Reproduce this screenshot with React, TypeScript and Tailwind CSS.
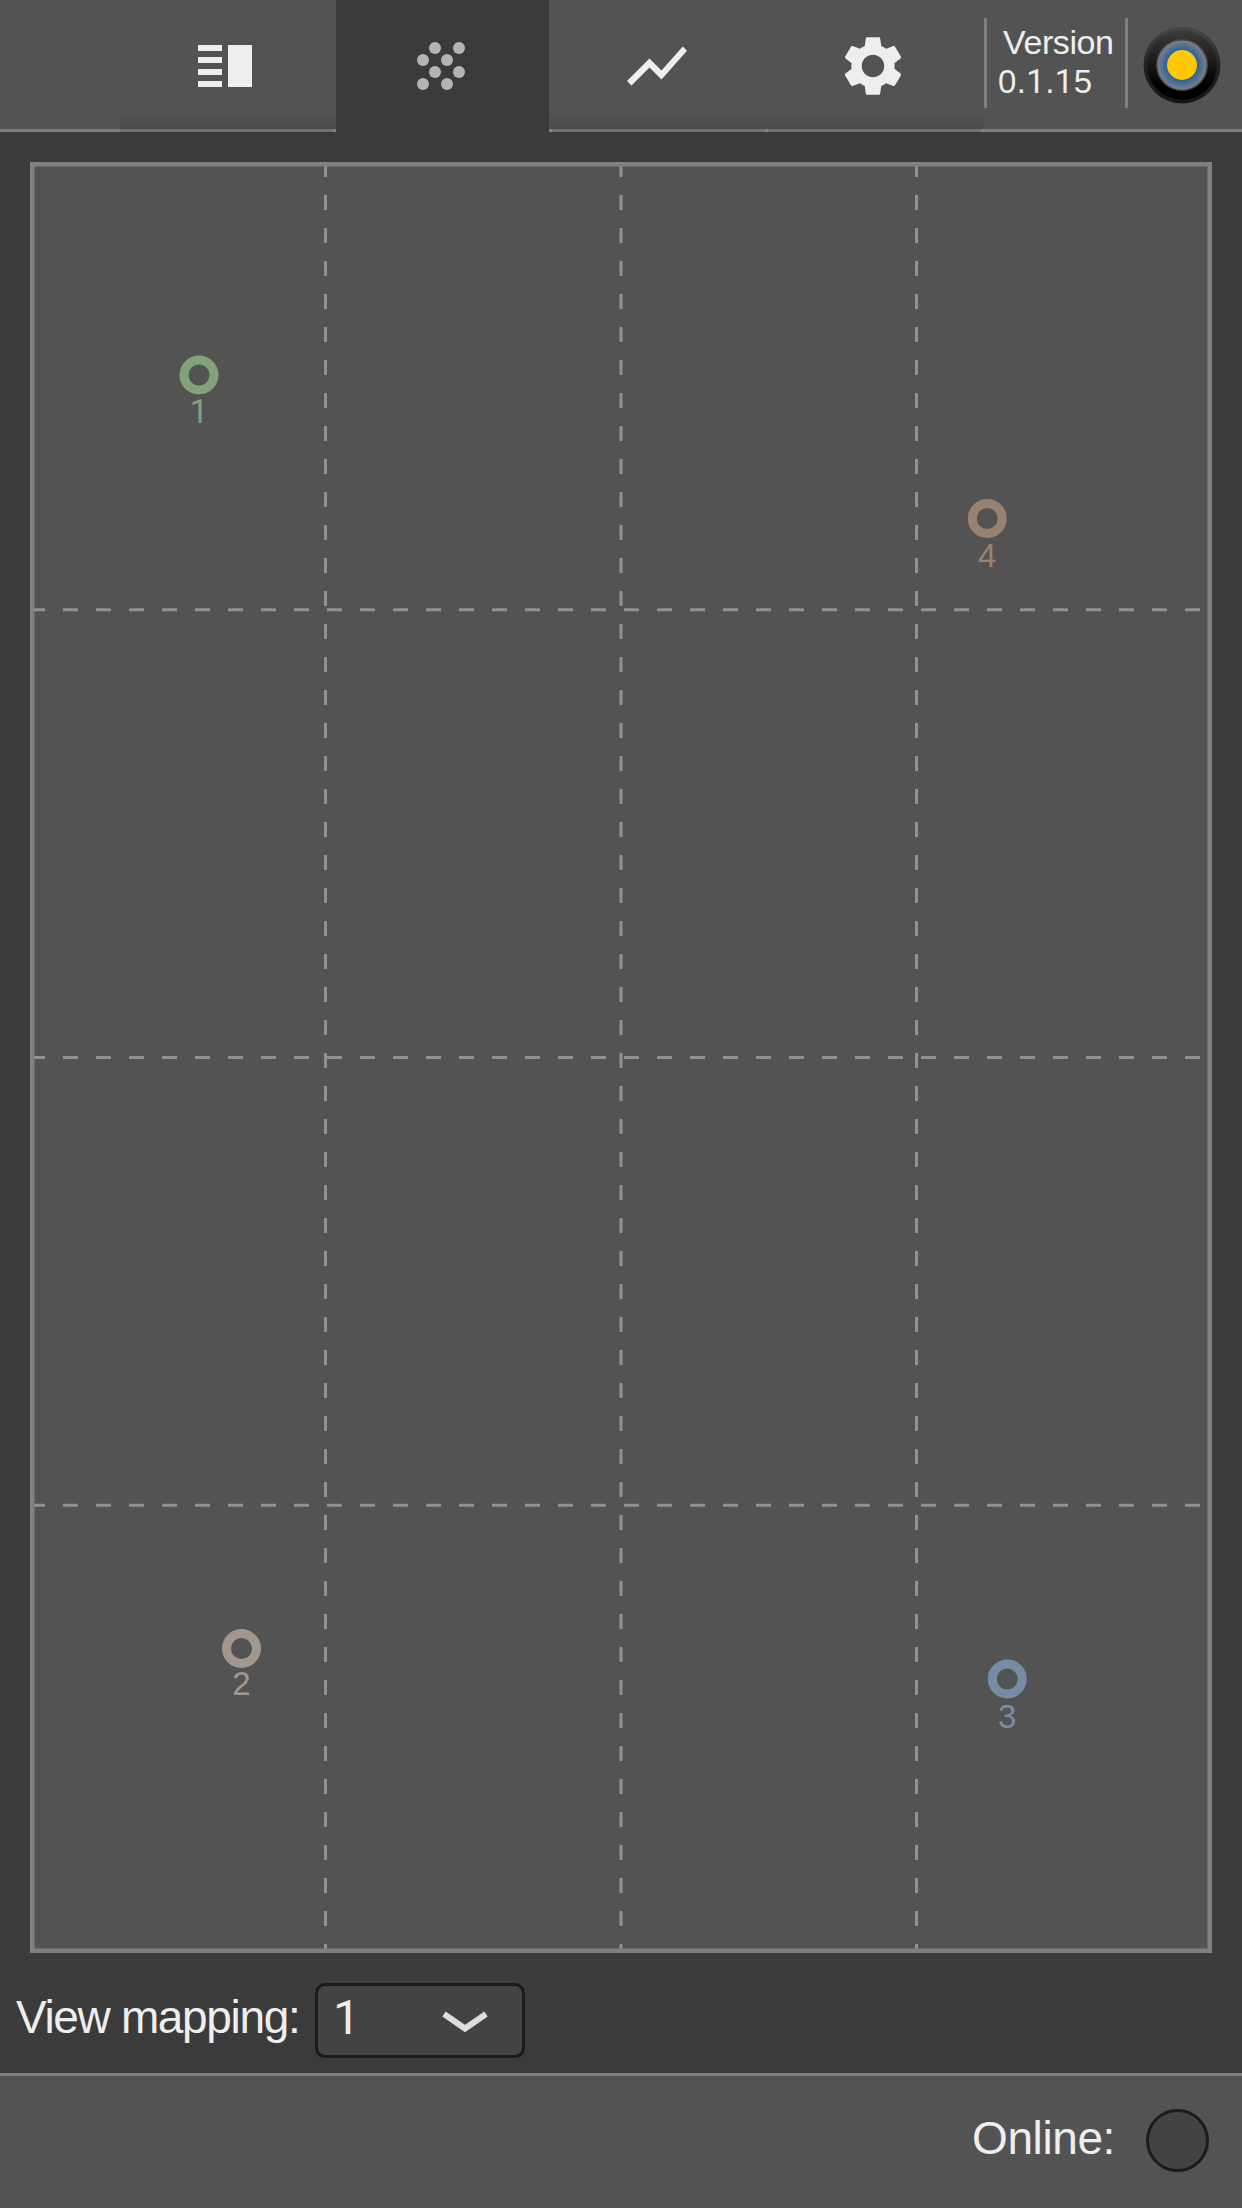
import type { ReactNode } from "react";

const COLUMNS = [295.5, 591, 886.5];
const ROWS = [447.75, 895.5, 1343.25];

const MARKERS = [
  { id: "1", x: 169, y: 213, labelY: 261, color: "#82a277" },
  { id: "4", x: 957.25, y: 356.5, labelY: 405, color: "#98826f" },
  { id: "2", x: 211.5, y: 1486.5, labelY: 1533, color: "#a2978c" },
  { id: "3", x: 977.25, y: 1517, labelY: 1566, color: "#768ca4" },
];

function Notch() {
  return <span className="w-[3px] bg-[#80868a]" />;
}

function Tab({ children, start, wide }: { children: ReactNode; start?: boolean; wide?: boolean }) {
  return (
    <button className={`flex h-[132px] flex-col ${wide ? "w-[219px]" : "w-[216px]"}`}>
      <span
        className={`flex h-[129px] w-full items-center justify-center bg-[linear-gradient(to_bottom,#535353_111px,#4b4b4b_129px)] ${wide ? "pr-[3px]" : ""}`}
      >
        {children}
      </span>
      <span className="flex h-[3px] w-full justify-between bg-[#6c7275]">
        {start ? <Notch /> : <span />}
        <Notch />
      </span>
    </button>
  );
}

function ListIcon() {
  return (
    <svg className="mt-[3px] -ml-[6px]" width="54" height="42" viewBox="0 0 54 42" fill="#eee">
      <path d="M0 0h24v6H0zM0 12h24v6H0zM0 24h24v6H0zM0 36h24v6H0zM30 0h24v42H30z" />
    </svg>
  );
}

function DotsIcon() {
  const dots = [[18, 6], [42, 6], [6, 18], [30, 18], [18, 30], [42, 30], [6, 42], [30, 42]];
  return (
    <svg className="-ml-[3px]" width="48" height="48" viewBox="0 0 48 48" fill="#b3b3b3">
      {dots.map(([x, y]) => (
        <circle key={`${x}-${y}`} cx={x} cy={y} r="6" />
      ))}
    </svg>
  );
}

function TrendIcon() {
  return (
    <svg className="mt-[3px]" width="72" height="72" viewBox="0 0 24 24" fill="#eee">
      <path d="M3.5 18.49l6-6.01 4 4L22 6.92l-1.41-1.41-7.09 7.97-4-4L2 16.99z" />
    </svg>
  );
}

function GearIcon() {
  return (
    <svg className="mt-[3px]" width="72" height="72" viewBox="0 0 24 24" fill="#eee">
      <path d="M19.14 12.94c.04-.3.06-.61.06-.94 0-.32-.02-.64-.07-.94l2.03-1.58c.18-.14.23-.41.12-.61l-1.92-3.32c-.12-.22-.37-.29-.59-.22l-2.39.96c-.5-.38-1.03-.7-1.62-.94l-.36-2.54c-.04-.24-.24-.41-.48-.41h-3.84c-.24 0-.43.17-.47.41l-.36 2.54c-.59.24-1.13.57-1.62.94l-2.39-.96c-.22-.08-.47 0-.59.22L2.74 8.87c-.12.21-.08.47.12.61l2.03 1.58c-.05.3-.09.63-.09.94s.02.64.07.94l-2.03 1.58c-.18.14-.23.41-.12.61l1.92 3.32c.12.22.37.29.59.22l2.39-.96c.5.38 1.03.7 1.62.94l.36 2.54c.05.24.24.41.48.41h3.84c.24 0 .44-.17.47-.41l.36-2.54c.59-.24 1.13-.56 1.62-.94l2.39.96c.22.08.47 0 .59-.22l1.92-3.32c.12-.22.07-.47-.12-.61l-2.01-1.58zM12 15.75c-2.07 0-3.75-1.68-3.75-3.75s1.68-3.75 3.75-3.75 3.75 1.68 3.75 3.75-1.68 3.75-3.75 3.75z" />
    </svg>
  );
}

function KnobLogo() {
  return (
    <svg width="78" height="78" viewBox="0 0 78 78">
      <defs>
        <linearGradient id="rim" x1="0" y1="0" x2="0" y2="1">
          <stop offset="0" stopColor="#484848" />
          <stop offset="0.55" stopColor="#202020" />
          <stop offset="1" stopColor="#151515" />
        </linearGradient>
        <linearGradient id="body" x1="0" y1="0" x2="0" y2="1">
          <stop offset="0" stopColor="#3c3c3c" />
          <stop offset="0.8" stopColor="#000" />
        </linearGradient>
        <radialGradient id="glow">
          <stop offset="0.58" stopColor="#1f5fa8" />
          <stop offset="1" stopColor="#7f7f7f" />
        </radialGradient>
      </defs>
      <circle cx="39" cy="39" r="38.5" fill="url(#rim)" />
      <circle cx="39" cy="39" r="35" fill="url(#body)" />
      <circle cx="39" cy="39" r="26" fill="#484848" />
      <circle cx="39" cy="39" r="24.5" fill="url(#glow)" />
      <circle cx="39" cy="39" r="15" fill="#ffc800" />
    </svg>
  );
}

function MappingPlot() {
  return (
    <svg className="block h-[1791px] w-[1182px] shrink-0 bg-[#535353]" viewBox="0 0 1182 1791">
      <g stroke="#919191" strokeWidth="3" strokeDasharray="15 18">
        {COLUMNS.map((x) => (
          <line key={x} x1={x} x2={x} y1="0" y2="1791" />
        ))}
        {ROWS.map((y) => (
          <line key={y} x1="0" x2="1182" y1={y} y2={y} />
        ))}
      </g>
      <rect x="2.25" y="2.25" width="1177.5" height="1786.5" fill="none" stroke="#808080" strokeWidth="4.5" />
      {MARKERS.map((m) => (
        <g key={m.id}>
          <circle cx={m.x} cy={m.y} r="15" fill="none" stroke={m.color} strokeWidth="9" />
          <text
            className={m.id === "1" ? "font-[Roboto,sans-serif]" : ""}
            x={m.x}
            y={m.labelY}
            fill={m.color}
            fontSize="33"
            textAnchor="middle"
          >
            {m.id}
          </text>
        </g>
      ))}
    </svg>
  );
}

export default function App() {
  return (
    <div className="flex h-[2208px] w-[1242px] flex-col overflow-hidden bg-[#3b3b3b] font-['Liberation_Sans',Arial,sans-serif] text-[#eee]">
      <header className="flex h-[132px] shrink-0">
        <div className="w-[120px] border-b-[3px] border-[#808080] bg-[#535353]" />
        <nav className="flex">
          <Tab>
            <ListIcon />
          </Tab>
          <button className="flex h-[132px] w-[213px] items-center justify-center bg-[#3b3b3b]">
            <DotsIcon />
          </button>
          <Tab start wide>
            <TrendIcon />
          </Tab>
          <Tab>
            <span className="-ml-[6px]">
              <GearIcon />
            </span>
          </Tab>
        </nav>
        <div className="flex flex-1 border-b-[3px] border-[#808080] bg-[#535353]">
          <div className="mt-[18px] flex h-[90px] w-[144px] flex-col border-x-[3px] border-[#808080] pt-[5px] pl-[11px] text-[34px] leading-[39px] whitespace-pre">
            <span className="pl-[5px] tracking-[-0.4px]">Version</span>
            <span className="text-[33px] tracking-[0.4px]">
              0.<span className="font-[Roboto,sans-serif]">1</span>.<span className="font-[Roboto,sans-serif]">1</span>5
            </span>
          </div>
          <div className="mt-[26px] ml-[15px]">
            <KnobLogo />
          </div>
        </div>
      </header>

      <main className="flex flex-1 flex-col pt-[30px]">
        <div className="flex justify-center">
          <MappingPlot />
        </div>
        <div className="mt-[30px] flex h-[75px] items-center">
          <label className="w-[315px] shrink-0 pb-[8px] pl-[16px] text-[46px] leading-[54px] tracking-[-1.35px] whitespace-nowrap">
            View mapping:
          </label>
          <button className="flex h-[75px] w-[210px] items-center justify-between rounded-[10px] border-[3px] border-[#1b1b1b] bg-[#434343] pr-[32px] pl-[15px]">
            <span className="pb-[6px] font-[Roboto,sans-serif] text-[48px] leading-[54px]">1</span>
            <svg width="48" height="24" viewBox="0 0 48 24" fill="none" stroke="#ddd" strokeWidth="6">
              <path d="M2 5L23 19.5L44 5" />
            </svg>
          </button>
        </div>
      </main>

      <footer className="flex h-[135px] shrink-0 items-center justify-end border-t-[3px] border-[#808080] bg-[#535353] pr-[33px]">
        <span className="mr-[31px] pb-[8px] text-[46px] leading-[54px] tracking-[-0.4px]">Online:</span>
        <span className="mt-[-3px] size-[63px] rounded-full border-[3px] border-[#1b1b1b] bg-[#434343]" />
      </footer>
    </div>
  );
}
